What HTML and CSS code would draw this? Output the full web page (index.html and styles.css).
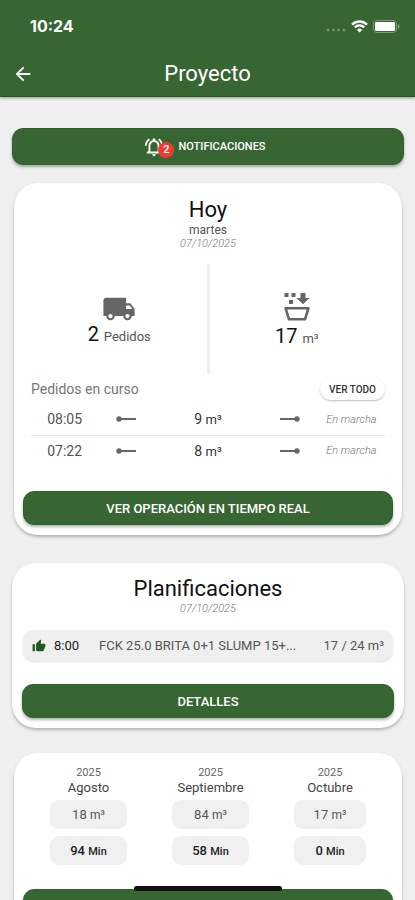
FILE: index.html
```html
<!DOCTYPE html>
<html lang="es">
<head>
<meta charset="utf-8">
<meta name="viewport" content="width=device-width, initial-scale=1">
<title>Proyecto</title>
<link rel="stylesheet" href="styles.css">
</head>
<body>
<div class="app">
  <header class="header">
    <div class="status">
      <span class="clock">10:24</span>
      <span class="status-icons">
        <svg width="20" height="5" viewBox="0 0 20 5" fill="#6f946c" aria-hidden="true"><circle cx="2" cy="2" r="1.500"/><circle cx="7.500" cy="2" r="1.500"/><circle cx="12.500" cy="2" r="1.500"/><circle cx="18" cy="2" r="1.500"/></svg>
        <svg class="wifi" width="17" height="13" viewBox="0 0 17 13" fill="none" stroke="#fff" stroke-width="2.3" aria-hidden="true"><path d="M1 4.6a10.6 10.6 0 0 1 15 0"/><path d="M3.8 7.4a6.6 6.6 0 0 1 9.4 0"/><path d="M8.500 12.600 5.900 9.900a3.700 3.700 0 0 1 5.200 0z" fill="#fff" stroke="none"/></svg>
        <svg class="battery" width="27" height="13" viewBox="0 0 27 13" aria-hidden="true"><rect x=".5" y=".5" width="23" height="12" rx="3.500" fill="none" stroke="#7a9e78"/><rect x="2" y="2" width="20" height="9" rx="1.500" fill="#fff"/><path d="M25 4.300c1.900.6 1.900 3.800 0 4.400z" fill="#8bab89"/></svg>
      </span>
    </div>
    <div class="bar">
      <button class="back" type="button" aria-label="Volver">
        <svg width="24" height="24" viewBox="0 0 24 24" fill="#fff"><path d="M20 11H7.830l5.590-5.590L12 4l-8 8 8 8 1.410-1.410L7.830 13H20v-2z"/></svg>
      </button>
      <h1 class="title">Proyecto</h1>
    </div>
  </header>

  <main class="content">
    <button class="btn btn-notify" type="button">
      <span class="bell">
        <svg width="22" height="22" viewBox="0 0 24 24" fill="#fff" aria-hidden="true"><path d="M12 22c1.100 0 2-.9 2-2h-4c0 1.100.9 2 2 2zm6-6v-5c0-3.070-1.630-5.640-4.500-6.320V4c0-.83-.67-1.500-1.500-1.500s-1.500.67-1.500 1.500v.68C7.640 5.360 6 7.920 6 11v5l-2 2v1h16v-1l-2-2zm-2 1H8v-6c0-2.480 1.510-4.500 4-4.500s4 2.020 4 4.500v6zM7.580 4.080 6.150 2.650C3.750 4.480 2.170 7.300 2.030 10.500h2c.15-2.650 1.510-4.970 3.550-6.420zM19.970 10.500h2c-.15-3.200-1.730-6.020-4.120-7.850l-1.420 1.430c2.020 1.450 3.390 3.770 3.540 6.420z"/></svg>
        <span class="badge">2</span>
      </span>
      NOTIFICACIONES
    </button>

    <section class="card card-today">
      <h2 class="card-title">Hoy</h2>
      <p class="weekday">martes</p>
      <p class="date">07/10/2025</p>
      <div class="stats">
        <div class="stat">
          <svg width="34" height="34" viewBox="0 0 24 24" fill="#666" aria-hidden="true"><path d="M20 8h-3V4H3c-1.100 0-2 .9-2 2v11h2c0 1.660 1.340 3 3 3s3-1.340 3-3h6c0 1.660 1.340 3 3 3s3-1.340 3-3h2v-5l-3-4zM6 18.500c-.83 0-1.500-.67-1.500-1.500s.67-1.500 1.500-1.500 1.500.67 1.500 1.500-.67 1.500-1.500 1.500zm13.500-9 1.960 2.500H17V9.500h2.500zm-1.500 9c-.83 0-1.500-.67-1.500-1.500s.67-1.500 1.500-1.500 1.500.67 1.500 1.500-.67 1.500-1.500 1.500z"/></svg>
          <p class="figure">2 <small>Pedidos</small></p>
        </div>
        <div class="divider"></div>
        <div class="stat stat-volume">
          <svg width="28" height="30" viewBox="0 0 28 30" fill="#666" aria-hidden="true"><path d="M1.500 1h4v4h-4zM8.500 1h4v4h-4zM6 8h4v4H6zM17.500 1h5v5h4L20 12.300 13.500 6h4z"/><path d="M2.600 16.300h22.800l-3.400 11H6z" fill="none" stroke="#666" stroke-width="2.600" stroke-linejoin="round"/></svg>
          <p class="figure">17 <small>m³</small></p>
        </div>
      </div>
      <div class="orders-head">
        <h3 class="orders-title">Pedidos en curso</h3>
        <button class="pill" type="button">VER TODO</button>
      </div>
      <table class="orders">
        <tbody>
          <tr>
            <td class="time">08:05</td>
            <td class="link"><svg width="20" height="6" viewBox="0 0 20 6" aria-hidden="true"><path d="M3 3h17" stroke="#666" stroke-width="2"/><circle cx="3" cy="3" r="2.700" fill="#666"/></svg></td>
            <td class="volume">9 <small>m³</small></td>
            <td class="link"><svg width="20" height="6" viewBox="0 0 20 6" aria-hidden="true"><path d="M0 3h17" stroke="#666" stroke-width="2"/><circle cx="17" cy="3" r="2.700" fill="#666"/></svg></td>
            <td class="state">En marcha</td>
          </tr>
          <tr>
            <td class="time">07:22</td>
            <td class="link"><svg width="20" height="6" viewBox="0 0 20 6" aria-hidden="true"><path d="M3 3h17" stroke="#666" stroke-width="2"/><circle cx="3" cy="3" r="2.700" fill="#666"/></svg></td>
            <td class="volume">8 <small>m³</small></td>
            <td class="link"><svg width="20" height="6" viewBox="0 0 20 6" aria-hidden="true"><path d="M0 3h17" stroke="#666" stroke-width="2"/><circle cx="17" cy="3" r="2.700" fill="#666"/></svg></td>
            <td class="state">En marcha</td>
          </tr>
        </tbody>
      </table>
      <button class="btn" type="button">VER OPERACIÓN EN TIEMPO REAL</button>
    </section>

    <section class="card card-plans">
      <h2 class="card-title">Planificaciones</h2>
      <p class="date">07/10/2025</p>
      <div class="plan">
        <svg width="14" height="14" viewBox="0 0 24 24" fill="#1f5a22" aria-hidden="true"><path d="M1 21h4V9H1v12zm22-11c0-1.100-.9-2-2-2h-6.310l.95-4.570.03-.32c0-.41-.17-.79-.44-1.060L14.170 1 7.590 7.590C7.220 7.950 7 8.450 7 9v10c0 1.100.9 2 2 2h9c.83 0 1.540-.5 1.840-1.220l3.020-7.050c.09-.23.14-.47.14-.73v-2z"/></svg>
        <span class="plan-time">8:00</span>
        <span class="plan-mix">FCK 25.0 BRITA 0+1 SLUMP 15+...</span>
        <span class="plan-volume">17 / 24 m³</span>
      </div>
      <button class="btn" type="button">DETALLES</button>
    </section>

    <section class="card card-months">
      <div class="months">
        <div class="month">
          <span class="year">2025</span>
          <span class="month-name">Agosto</span>
          <span class="chip">18 <small>m³</small></span>
          <span class="chip chip-strong">94 <small>Min</small></span>
        </div>
        <div class="month">
          <span class="year">2025</span>
          <span class="month-name">Septiembre</span>
          <span class="chip">84 <small>m³</small></span>
          <span class="chip chip-strong">58 <small>Min</small></span>
        </div>
        <div class="month">
          <span class="year">2025</span>
          <span class="month-name">Octubre</span>
          <span class="chip">17 <small>m³</small></span>
          <span class="chip chip-strong">0 <small>Min</small></span>
        </div>
      </div>
      <button class="btn" type="button" aria-label="Detalles por mes"></button>
    </section>
  </main>
  <div class="home-indicator"></div>
</div>
</body>
</html>
```
FILE: styles.css
```css
* {
  box-sizing: border-box;
  margin: 0;
  padding: 0;
}

body {
  background: #efefef;
  color: #111;
  font-family: Roboto, "Liberation Sans", sans-serif;
}

button {
  border: 0;
  font-family: inherit;
  cursor: pointer;
}

svg {
  display: block;
  flex: none;
}

.app {
  display: flex;
  flex-direction: column;
  height: 100vh;
}

/* Header */

.header {
  flex: none;
  background: #376633;
  color: #fff;
  border-bottom: 1px solid #1f5a1c;
  box-shadow: 0 1px 3px rgba(0, 0, 0, 0.4);
  z-index: 1;
}

.status {
  display: flex;
  align-items: center;
  justify-content: space-between;
  height: 52px;
  padding: 0 15px 0 30px;
}

.clock {
  font-family: Inter, sans-serif;
  font-size: 16px;
  font-weight: 700;
}

.status-icons {
  display: flex;
  align-items: flex-end;
  gap: 5px;
}

.bar {
  display: grid;
  grid-template-columns: 48px 1fr 48px;
  align-items: center;
  height: 44px;
  padding-bottom: 1px;
}

.back {
  display: flex;
  justify-content: center;
  width: 46px;
  background: none;
}

.back svg {
  width: 22px;
  height: 22px;
}

.title {
  font-size: 22px;
  font-weight: 400;
  line-height: 26px;
  text-align: center;
}

/* Content */

.content {
  flex: 1;
  min-height: 0;
  overflow-y: auto;
  scrollbar-width: none;
  padding: 31px 11px 31px 12px;
}

.btn {
  display: flex;
  align-items: center;
  justify-content: center;
  width: 100%;
  height: 34px;
  border-radius: 11px;
  background: #376633;
  border: 1px solid #2a6427;
  box-shadow: 0 2px 3px rgba(0, 0, 0, 0.3);
  color: #fff;
  font-size: 13px;
  font-weight: 500;
}

.btn-notify {
  height: 37px;
  gap: 13px;
  margin-bottom: 18px;
  padding-right: 7px;
  font-size: 11px;
}

.bell {
  position: relative;
}

.badge {
  position: absolute;
  left: 15px;
  top: 6px;
  width: 16px;
  height: 16px;
  border-radius: 50%;
  background: #f03a30;
  font-size: 11px;
  line-height: 16px;
  text-align: center;
}

.card {
  border-radius: 24px;
  background: #fff;
  box-shadow: 0 2px 3px rgba(0, 0, 0, 0.25);
  text-align: center;
}

.card-title {
  font-size: 22px;
  font-weight: 400;
  line-height: 26px;
}

.weekday {
  color: #555;
  font-size: 12px;
  line-height: 14px;
}

.date {
  color: #777;
  font-size: 11px;
  font-style: italic;
  font-weight: 300;
  line-height: 14px;
}

/* Today */

.card-today {
  margin: 0 2px 28px;
  padding: 14px 9px 10px;
}

.stats {
  display: grid;
  grid-template-columns: 1fr 3px 1fr;
  height: 110px;
  margin-top: 13px;
  padding: 0 9px;
}

.divider {
  background: #efefef;
}

.stat {
  display: flex;
  flex-direction: column;
  align-items: center;
  padding-top: 28px;
}

.stat-volume {
  gap: 2px;
}

.figure {
  font-size: 20px;
  line-height: 24px;
  margin-top: -4px;
}

.stat-volume .figure {
  margin-top: 0;
}

.figure small {
  color: #555;
  font-size: 13px;
}

.orders-head {
  display: flex;
  align-items: center;
  justify-content: space-between;
  margin-top: 4px;
  padding: 0 8px;
}

.orders-title {
  color: #777;
  font-size: 14px;
  font-weight: 400;
}

.pill {
  width: 65px;
  height: 22px;
  border-radius: 11px;
  background: #fff;
  box-shadow: 0 1px 2px rgba(0, 0, 0, 0.25);
  color: #333;
  font-size: 10px;
  font-weight: 500;
}

.orders {
  width: calc(100% - 16px);
  margin: 4px 8px 25px;
  border-collapse: collapse;
  table-layout: fixed;
  color: #555;
  font-size: 14px;
}

.orders td {
  height: 31px;
  text-align: center;
}

.orders tr + tr td {
  border-top: 1px solid #e4e4e4;
}

.orders .time {
  width: 19%;
}

.orders .link svg {
  margin: 0 auto;
}

.orders .volume {
  color: #333;
  width: 31%;
}

.orders .volume small {
  font-size: 13px;
}

.orders .state {
  width: 19%;
  color: #777;
  font-size: 11px;
  font-style: italic;
  font-weight: 300;
  white-space: nowrap;
}

/* Plans */

.card-plans {
  margin-bottom: 25px;
  padding: 13px 10px 10px;
}

.plan {
  display: flex;
  align-items: center;
  height: 31px;
  margin: 14px 1px 23px;
  padding: 0 9px;
  border-radius: 11px;
  background: #efefef;
  box-shadow: 0 1px 2px rgba(0, 0, 0, 0.12);
  color: #555;
  font-size: 13px;
}

.plan-time {
  margin: 0 20px 0 8px;
  color: #222;
}

.plan-mix {
  flex: 1;
  min-width: 0;
  overflow: hidden;
  text-align: left;
  white-space: nowrap;
}

/* Months */

.card-months {
  margin: 0 2px;
  padding: 13px 9px 10px;
}

.months {
  display: grid;
  grid-template-columns: 77fr 77fr 72fr;
  gap: 45px;
  margin-bottom: 24px;
  padding: 0 27px;
}

.month {
  display: flex;
  flex-direction: column;
}

.year {
  color: #666;
  font-size: 11px;
  line-height: 14px;
}

.month-name {
  color: #444;
  font-size: 13px;
  line-height: 16px;
  margin-bottom: 4px;
}

.chip {
  height: 29px;
  border-radius: 9px;
  background: #f0f0f0;
  color: #555;
  font-size: 13px;
  line-height: 29px;
}

.chip small {
  font-size: 12px;
}

.chip-strong {
  margin-top: 7px;
  color: #222;
  font-weight: 500;
}

.chip-strong small {
  font-size: 11px;
}

.home-indicator {
  position: fixed;
  bottom: 9px;
  left: 50%;
  width: 148px;
  height: 5px;
  margin-left: -74px;
  border-radius: 3px;
  background: #111;
  z-index: 2;
}
```
